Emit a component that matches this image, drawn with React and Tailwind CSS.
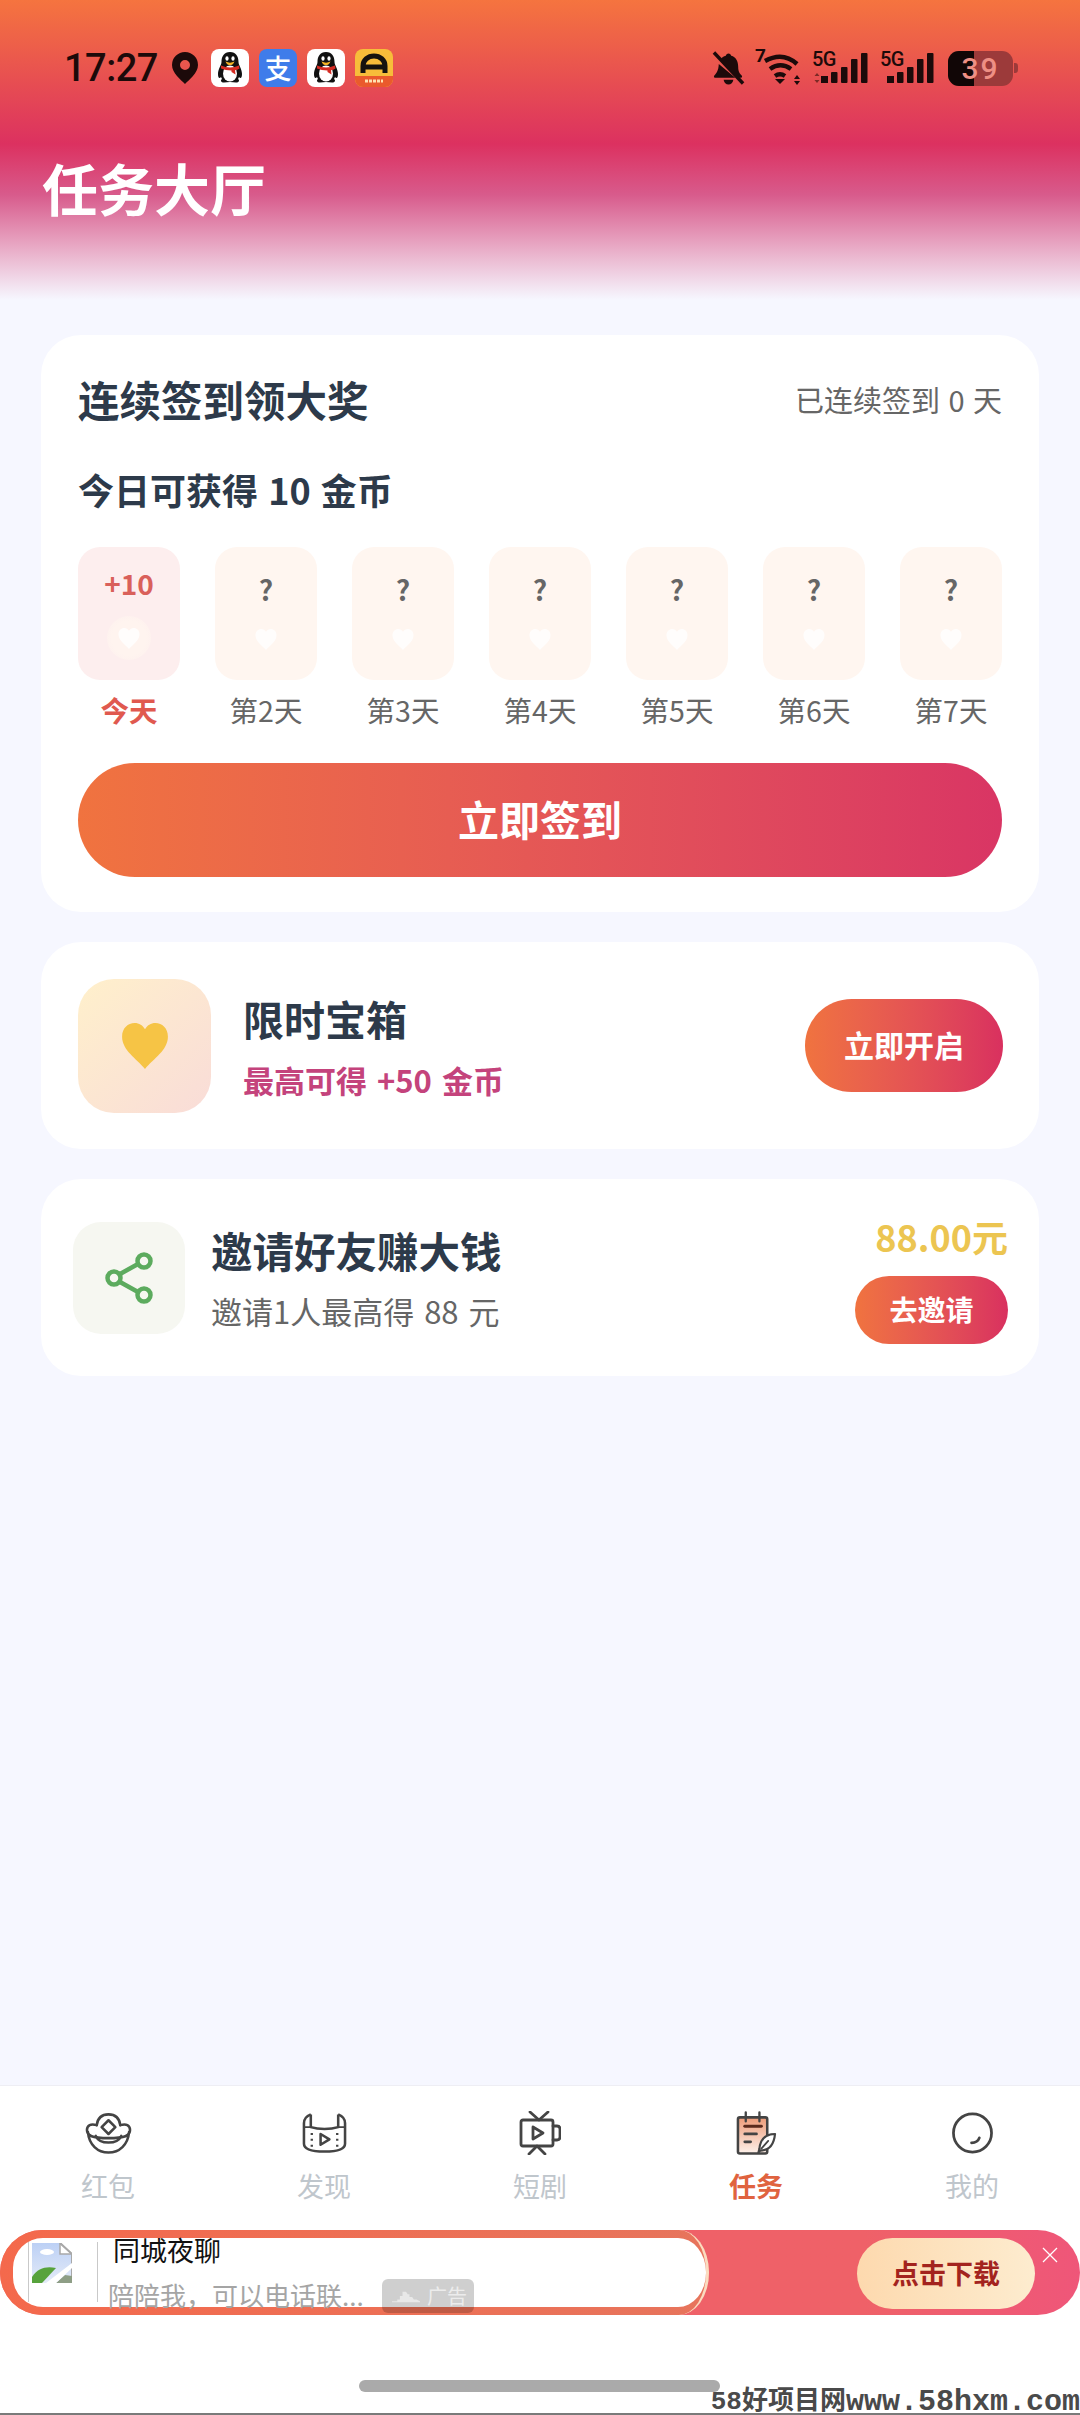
import React from "react";

const DAYS = ["第2天", "第3天", "第4天", "第5天", "第6天", "第7天"];

function Heart({ className }) {
  return (
    <svg viewBox="0 0 24 24" className={className} fill="currentColor">
      <path d="M12 23C8 18 1 14 1 7.500C1 3.500 3.800 1 7 1c2.200 0 4 1.200 5 3 1-1.800 2.800-3 5-3 3.200 0 6 2.500 6 6.500C23 14 16 18 12 23z" />
    </svg>
  );
}

function Penguin() {
  return (
    <svg viewBox="0 0 38 38" className="h-[38px] w-[38px]">
      <rect width="38" height="38" rx="8" fill="#fff" />
      <path d="M19 3c-6 0-8.500 4.500-8.500 10 0 3-3.500 7-3.500 12 0 4 1.500 5 3 3l1 2c-2 1.500-1 3.500 2 3.500 2 0 4-.5 6-.5s4 .5 6 .5c3 0 4-2 2-3.500l1-2c1.500 2 3 1 3-3 0-5-3.500-9-3.500-12C27.500 7.500 25 3 19 3z" fill="#111" />
      <ellipse cx="19" cy="24.500" rx="7" ry="8" fill="#fff" />
      <ellipse cx="16" cy="9.500" rx="1.600" ry="2.300" fill="#fff" />
      <ellipse cx="22" cy="9.500" rx="1.600" ry="2.300" fill="#fff" />
      <path d="M14.500 12.500c3 1.500 6 1.500 9 0-1 3-3 3.500-4.500 3.500s-3.500-.5-4.500-3.500z" fill="#f5b325" />
      <path d="M10 16.500c6 2.500 12 2.500 18 0l.5 3c-1.500 1-3 1.500-4.500 1.800l.5 4.200-4-2.500V21.500c-4 0-7.500-1-10.500-2z" fill="#d62b22" />
    </svg>
  );
}

function CarApp() {
  return (
    <svg viewBox="0 0 38 38" className="h-[38px] w-[38px]">
      <rect width="38" height="38" rx="8" fill="#f7bd3a" />
      <path d="M0 27h38v3a8 8 0 0 1-8 8H8a8 8 0 0 1-8-8z" fill="#ea5a2c" />
      <path d="M8 24v-7c0-6 5-10 11-10s11 4 11 10v7" fill="none" stroke="#15130f" strokeWidth="5" />
      <path d="M9 18h20" stroke="#15130f" strokeWidth="5" />
      <path d="M10 32h18" stroke="#ffe2b0" strokeWidth="3" strokeDasharray="3 1" />
    </svg>
  );
}

function BellOff() {
  return (
    <svg viewBox="0 0 34 36" className="h-[36px] w-[33px]" fill="#1c0a0a">
      <path d="M17 3c-1.500 0-2.500 1-2.800 2.400C12 6 10.200 7.200 9 9l17 19h4c1 0 1.400-1.400.6-2.200-2-2-3.600-4-3.600-8.800 0-5.800-2.300-10.400-7.200-11.600C19.500 4 18.500 3 17 3z" />
      <path d="M7 14c-.3 7-2.600 9.800-4.600 11.800-.8.8-.4 2.200.6 2.200h21z" />
      <path d="M12 30h10c-.4 3-2.500 5-5 5s-4.600-2-5-5z" />
      <path d="M2 2l30 32" stroke="#1c0a0a" strokeWidth="3.500" />
    </svg>
  );
}

function Wifi() {
  return (
    <div className="relative h-[36px] w-[47px]">
      <span className="absolute top-[-4px] left-0 font-['Roboto'] text-[19px] leading-[20px] font-bold text-[#1c0a0a]">7</span>
      <svg viewBox="0 0 47 36" className="absolute inset-0 h-[36px] w-[47px]" fill="none" stroke="#1c0a0a" strokeWidth="4.500">
        <path d="M10 11c11-6 22-6 32 3" />
        <path d="M15 19c7-5 14-5 21 0" />
        <path d="M20 26c3-2 7-2 10 0" />
        <path d="M20 29h10l-5 5z" fill="#1c0a0a" stroke="none" />
        <path d="M42 25l-3 4h6zM42 35l-3-4h6z" fill="#1c0a0a" stroke="none" />
      </svg>
    </div>
  );
}

function Signal({ dim }) {
  return (
    <div className={`relative h-[36px] ${dim ? "w-[56px]" : "w-[54px]"}`}>
      <span className="absolute top-[1px] left-0 font-['Roboto'] text-[20px] leading-[16px] font-medium tracking-[-0.5px] text-[#1c0a0a]">5G</span>
      <svg viewBox="0 2 54 36" className="absolute top-0 right-0 h-[36px] w-[54px]" fill="#1c0a0a">
        <rect x="7" y="28" width="7" height="7" />
        <rect x="17" y="24" width="6.500" height="11" rx="1" />
        <rect x="27" y="19" width="6.500" height="16" rx="1" />
        <rect x="37" y="11" width="6.500" height="24" rx="1" />
        <rect x="47" y="5" width="6.500" height="30" rx="1" />
        {dim && <path d="M3 25l-2.500 3h5zM3 35l-2.500-3h5z" fill="#7c2a26" />}
      </svg>
    </div>
  );
}

function Battery() {
  return (
    <div className="flex items-center">
      <div className="relative flex h-[35px] w-[65px] items-center justify-center overflow-hidden rounded-[11px] bg-[#9c3a3a]">
        <div className="absolute inset-y-0 left-0 w-[26px] bg-[#110606]" />
        <span className="relative font-['Roboto'] text-[30px] leading-[35px] font-medium tracking-[2px] text-[#ee8f84]">39</span>
      </div>
      <div className="ml-[1px] h-[10px] w-[4px] rounded-r-[3px] bg-[#9c3a3a]" />
    </div>
  );
}

function StatusBar() {
  return (
    <div className="flex h-[38px] items-center justify-between pr-[62px] pl-[64px]">
      <div className="flex items-center">
        <span className="w-[101px] font-['Roboto'] text-[38px] leading-[38px] font-medium tracking-[-0.5px] text-[#1c0a0a]">17:27</span>
        <svg viewBox="0 0 26 32" className="ml-[7px] h-[32px] w-[26px]">
          <path fillRule="evenodd" d="M13 0a13 13 0 0 1 13 13c0 8-9 15-13 19C9 28 0 21 0 13A13 13 0 0 1 13 0zm0 8a5 5 0 1 0 0 10 5 5 0 0 0 0-10z" fill="#1c0a0a" />
        </svg>
        <div className="ml-[13px] flex items-center gap-[10px]">
          <Penguin />
          <div className="flex h-[38px] w-[38px] items-center justify-center rounded-[8px] bg-[#3f7cea] text-[27px] leading-[38px] font-medium text-white">支</div>
          <Penguin />
          <CarApp />
        </div>
      </div>
      <div className="flex items-center">
        <BellOff />
        <div className="ml-[10px]"><Wifi /></div>
        <div className="ml-[10px]"><Signal dim /></div>
        <div className="ml-[12px]"><Signal /></div>
        <div className="ml-[14px]"><Battery /></div>
      </div>
    </div>
  );
}

function DayTile({ label, today }) {
  return (
    <div className="flex w-[102px] flex-col items-center">
      <div className={`flex h-[133px] w-full flex-col items-center rounded-[22px] ${today ? "bg-[#fdeeee]" : "bg-[#fff6f0]"}`}>
        {today ? (
          <span className="mt-[18px] h-[36px] text-[28px] leading-[36px] font-bold text-[#d9605a]">+10</span>
        ) : (
          <span className="mt-[24px] h-[36px] text-[28px] leading-[36px] font-bold text-[#666666]">?</span>
        )}
        <div className={`flex h-[44px] w-[44px] items-center justify-center rounded-full ${today ? "mt-[15px] bg-[radial-gradient(circle,#fff4ef_55%,#fdeeee_100%)]" : "mt-[10px]"}`}>
          <Heart className="h-[23px] w-[24px] text-white opacity-85" />
        </div>
      </div>
      <span className={`mt-[12px] text-[28.500px] leading-[36px] ${today ? "font-bold text-[#e0594f]" : "text-[#666666]"}`}>{label}</span>
    </div>
  );
}

function IngotIcon() {
  return (
    <svg viewBox="0 0 48 42" className="h-[42px] w-[47px]" fill="none" stroke="#444444" strokeWidth="2.600" strokeLinejoin="round" strokeLinecap="round">
      <path d="M12 13C13 5 18 2 24 2s11 3 12 11" />
      <path d="M12 13C6 11 2 13 2 18c0 3 2 5 4 6M36 13c6-2 10 0 10 5 0 3-2 5-4 6" />
      <path d="M24 8l7 7-7 7-7-7z" />
      <path d="M6 24c8 3 28 3 36 0" />
      <path d="M3 20c1 13 10 21 21 21s20-8 21-21" />
      <path d="M11 24c4 9 22 9 26 0" />
    </svg>
  );
}

function FilmIcon() {
  return (
    <svg viewBox="0 0 46 40" className="h-[40px] w-[45px]" fill="none" stroke="#444444" strokeWidth="2.600" strokeLinejoin="round">
      <path d="M9 1C4 3 2 6 2 10v21c0 5 6 8 21 8s21-3 21-8V10c0-4-2-7-7-9" />
      <path d="M9 1v13c8 2.500 20 2.500 28 0V1" />
      <path d="M2 14c2 0 5 0 7 0M44 14c-2 0-5 0-7 0" strokeWidth="2" />
      <path d="M10 20v2M10 26v2M10 32v2M36 20v2M36 26v2M36 32v2" strokeWidth="2.400" />
      <path d="M19 21l9 5.500-9 5.500z" />
    </svg>
  );
}

function TvIcon() {
  return (
    <svg viewBox="0 0 42 44" className="h-[44px] w-[42px]" fill="none" stroke="#444444" strokeWidth="2.800" strokeLinejoin="round" strokeLinecap="round">
      <path d="M11 1l9 8 9-8" />
      <rect x="2" y="9" width="32" height="26" rx="2" />
      <path d="M34 15h4c2 0 3 1 3 3v8c0 2-1 3-3 3h-4" />
      <path d="M14 16l10 6-10 6z" />
      <path d="M10 43l8-8 8 8" />
    </svg>
  );
}

function TaskIcon() {
  return (
    <svg viewBox="0 0 42 44" className="h-[44px] w-[41px]" fill="none" strokeLinecap="round">
      <defs>
        <linearGradient id="task-paper" x1="0" y1="0" x2="0" y2="1">
          <stop offset="0" stopColor="#ee9b78" />
          <stop offset="1" stopColor="#fdf1ea" />
        </linearGradient>
      </defs>
      <rect x="2" y="6" width="30" height="37" rx="2" fill="url(#task-paper)" stroke="#444444" strokeWidth="2.600" />
      <path d="M10 1v9M24 1v9" stroke="#444444" strokeWidth="2.400" />
      <path d="M9 15h17" stroke="#5a2a1c" strokeWidth="3" />
      <path d="M9 23h12M9 31h6" stroke="#444444" strokeWidth="2.800" />
      <path d="M40 23c-9 0-15 5-16 15l-1 4 2-2c10 0 14-7 15-17z" fill="#fff" stroke="#444444" strokeWidth="2.200" strokeLinejoin="round" />
      <path d="M26 38l7-8" stroke="#444444" strokeWidth="1.800" />
    </svg>
  );
}

function MeIcon() {
  return (
    <svg viewBox="0 0 42 42" className="h-[42px] w-[41px]" fill="none" stroke="#444444" strokeWidth="2.800" strokeLinecap="round">
      <circle cx="21" cy="21" r="19.500" />
      <path d="M20 31c4 0 7-2 8-5" />
    </svg>
  );
}

const TABS = [
  { label: "红包", icon: <IngotIcon /> },
  { label: "发现", icon: <FilmIcon /> },
  { label: "短剧", icon: <TvIcon /> },
  { label: "任务", icon: <TaskIcon />, active: true },
  { label: "我的", icon: <MeIcon /> },
];

function BrokenImage() {
  return (
    <svg viewBox="0 0 40 40" className="h-[40px] w-[40px]">
      <defs>
        <linearGradient id="broken-sky" x1="0" y1="0" x2="0" y2="1">
          <stop offset="0" stopColor="#bcd0f5" />
          <stop offset="1" stopColor="#e4ebf8" />
        </linearGradient>
      </defs>
      <path d="M0 0h28l12 11v29H0z" fill="url(#broken-sky)" />
      <path d="M28 0v11h12z" fill="#fff" stroke="#a8a8a8" strokeWidth="1.500" />
      <path d="M28 0l12 11v22" fill="none" stroke="#a8a8a8" strokeWidth="2" />
      <ellipse cx="15" cy="9" rx="7" ry="3" fill="#fff" />
      <path d="M0 40V34C6 25 14 23 24 25L10 40z" fill="#57a33c" />
      <path d="M24 40l9-8 7 1v7z" fill="#8e9e86" />
      <path d="M14 40L40 20v5L24 40z" fill="#fff" />
    </svg>
  );
}

function AdBanner() {
  return (
    <div className="relative mt-[26px] flex h-[85px] items-center rounded-full bg-gradient-to-r from-[#ef6168] via-[#ef6168] via-80% to-[#ef5679]">
      <div className="flex h-full w-[709px] items-center rounded-tl-[42px] rounded-tr-[30px_42px] rounded-br-[30px_42px] rounded-bl-[42px] border-r-[3px] border-[#fbdcc0] bg-gradient-to-r from-[#f4694c] to-[#e7745c] pl-[13px]">
        <div className="relative h-[69px] w-[693px] rounded-l-[30px] rounded-tr-[28px_34px] rounded-br-[28px_34px] bg-white">
          <div className="absolute top-[4px] left-[15px] h-[60px] w-[70px] border-x border-[#c9c9c9]" />
          <div className="absolute top-[5px] left-[19px]"><BrokenImage /></div>
          <span className="absolute top-[-6px] left-[100px] text-[27px] leading-[36px] text-[#111111]">同城夜聊</span>
          <span className="absolute top-[41px] left-[95px] text-[26px] leading-[32px] text-[#a5a5a5]">陪陪我，可以电话联...</span>
        </div>
      </div>
      <div className="absolute top-[49px] left-[382px] flex h-[34px] w-[92px] items-center gap-[6px] rounded-[6px] bg-[#00000030] pl-[9px]">
        <svg viewBox="0 0 32 16" className="h-[14px] w-[30px]" fill="#e8e8e8">
          <path d="M0 14h6V12h3V8h3V3h4l2 3h2v3h3l2 3h3l4 2v1H0z" />
        </svg>
        <span className="text-[20px] leading-[26px] text-[#ececec]">广告</span>
      </div>
      <button className="absolute top-[8px] left-[857px] h-[71px] w-[178px] rounded-full bg-gradient-to-r from-[#fdd9ae] to-[#fdeccf] pb-[2px] text-[27px] leading-[69px] font-bold text-[#a3231e]">点击下载</button>
      <svg viewBox="0 0 16 16" className="absolute top-[17px] left-[1042px] h-[16px] w-[16px]" stroke="#ffffff" strokeWidth="1.300">
        <path d="M1 1l14 14M15 1L1 15" />
      </svg>
    </div>
  );
}

export default function App() {
  return (
    <div className="relative flex h-[2415px] w-[1080px] flex-col overflow-hidden bg-[#f6f7ff] font-['Noto_Sans_CJK_SC','Noto_Sans',sans-serif]">
      <header className="h-[300px] bg-[linear-gradient(180deg,#f5743f_0%,#dc3160_48%,#d85b8c_65%,#e8a8c4_82%,#f6f7ff_100%)] pt-[49px]">
        <StatusBar />
        <h1 className="mt-[65px] pl-[42px] text-[56px] leading-[70px] font-bold text-white">任务大厅</h1>
      </header>

      <main className="flex flex-1 flex-col gap-[30px] px-[41px] pt-[35px]">
        <section className="rounded-[40px] bg-white px-[37px] pt-[36px] pb-[35px]">
          <div className="flex items-center justify-between">
            <h2 className="text-[41.500px] leading-[56px] font-bold text-[#2d3a4a]">连续签到领大奖</h2>
            <span className="text-[29px] leading-[40px] text-[#666666] [word-spacing:2px]">已连续签到 0 天</span>
          </div>
          <p className="mt-[40px] text-[36px] leading-[44px] font-bold text-[#2d3a4a] [word-spacing:2px]">今日可获得 10 金币</p>
          <div className="mt-[36px] flex justify-between">
            <DayTile label="今天" today />
            {DAYS.map((d) => (
              <DayTile key={d} label={d} />
            ))}
          </div>
          <button className="mt-[35px] h-[114px] w-full rounded-full bg-gradient-to-r from-[#f0733f] to-[#d93564] pb-[3px] text-[41px] font-bold text-white">立即签到</button>
        </section>

        <section className="flex h-[207px] items-center rounded-[40px] bg-white pr-[36px] pl-[37px]">
          <div className="flex h-[134px] w-[133px] items-center justify-center rounded-[36px] bg-gradient-to-br from-[#fff0cb] to-[#f9dcd8]">
            <Heart className="h-[50px] w-[52px] text-[#f6c445]" />
          </div>
          <div className="ml-[32px] flex flex-1 flex-col">
            <span className="text-[41px] leading-[52px] font-bold text-[#2d3a4a]">限时宝箱</span>
            <span className="mt-[16px] text-[31px] leading-[40px] font-bold text-[#c4437c] [word-spacing:3px]">最高可得 +50 金币</span>
          </div>
          <button className="h-[93px] w-[198px] rounded-full bg-gradient-to-r from-[#f0733f] to-[#d9305f] pb-[2px] text-[30px] font-bold text-white">立即开启</button>
        </section>

        <section className="flex h-[197px] items-center rounded-[40px] bg-white pr-[31px] pl-[32px]">
          <div className="flex h-[112px] w-[112px] items-center justify-center rounded-[28px] bg-[#f6f7f1]">
            <svg viewBox="0 0 48 52" className="h-[52px] w-[48px]" fill="none" stroke="#5cab5e" strokeWidth="4.500">
              <circle cx="39" cy="9" r="6.500" />
              <circle cx="9" cy="26" r="6.500" />
              <circle cx="39" cy="43" r="6.500" />
              <path d="M15 22l18-10M15 30l18 10" />
            </svg>
          </div>
          <div className="ml-[26px] flex flex-1 flex-col">
            <span className="text-[41.500px] leading-[52px] font-bold text-[#2d3a4a]">邀请好友赚大钱</span>
            <span className="mt-[15px] text-[31px] leading-[40px] text-[#666666] [word-spacing:3px]">邀请1人最高得 88 元</span>
          </div>
          <div className="flex flex-col items-end">
            <span className="text-[36px] leading-[48px] font-bold text-[#ecc551]">88.00元</span>
            <button className="mt-[16px] h-[68px] w-[153px] rounded-full bg-gradient-to-r from-[#f0733f] to-[#d9305f] pb-[2px] text-[28px] font-bold text-white">去邀请</button>
          </div>
        </section>
      </main>

      <footer className="h-[330px] border-t border-[#eeeef4] bg-white">
        <nav className="grid grid-cols-5 pt-[24px]">
          {TABS.map((t) => (
            <div key={t.label} className="flex flex-col items-center">
              <div className="flex h-[46px] items-center">{t.icon}</div>
              <span className={`mt-[12px] text-[27px] leading-[36px] ${t.active ? "font-bold text-[#e0633f]" : "text-[#bfc6cc]"}`}>{t.label}</span>
            </div>
          ))}
        </nav>
        <AdBanner />
      </footer>

      <div className="absolute top-[2380px] left-[359px] h-[12px] w-[361px] rounded-full bg-[#aaaaaa]" />
      <div className="absolute right-0 bottom-0 flex items-end font-['Liberation_Mono','Noto_Sans_CJK_SC',monospace] leading-[26px] font-bold text-[#4a4a4a]">
        <span className="text-[26px]">58好项目网</span>
        <span className="text-[30px]">www.58hxm.com</span>
      </div>
      <div className="absolute bottom-0 left-0 h-[2px] w-full bg-[#7a7a7a]" />
    </div>
  );
}
